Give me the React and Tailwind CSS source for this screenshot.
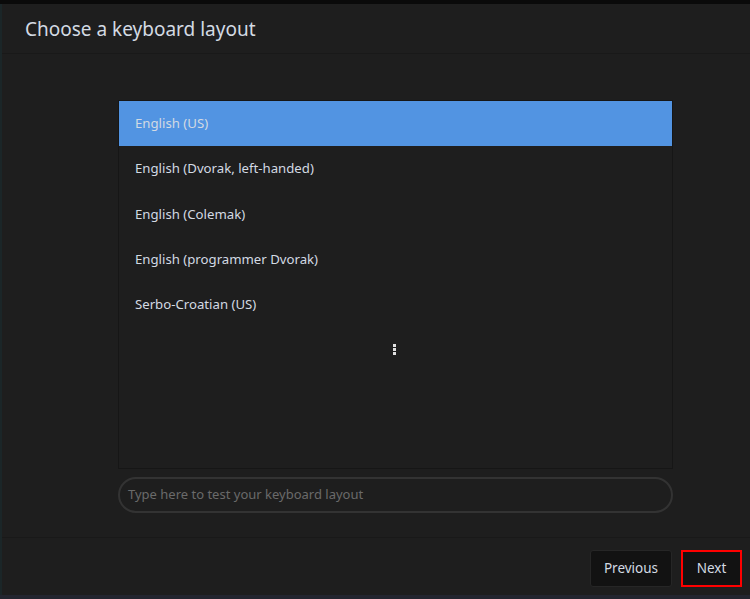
import React from "react";

const items = [
  "English (US)",
  "English (Dvorak, left-handed)",
  "English (Colemak)",
  "English (programmer Dvorak)",
  "Serbo-Croatian (US)",
];

export default function App() {
  return (
    <div
      className="w-[750px] h-[599px] flex flex-col bg-[#1e1e1e] overflow-hidden"
      style={{ fontFamily: '"Noto Sans", "Open Sans", sans-serif' }}
    >
      <div className="h-[4px] bg-[#0a0a0a] shrink-0" />
      <div className="flex-1 flex min-h-0">
        <div className="w-[2px] bg-[#1b2628]" />
        <div className="flex-1 flex flex-col min-w-0">
          <div className="h-[50px] shrink-0 flex items-center pl-[23px] pt-[2px] border-b border-[#191919]">
            <span className="text-[19px] text-[#d3dae3]">Choose a keyboard layout</span>
          </div>
          <div className="flex-1 flex flex-col pt-[46px] pl-[116px] border-b border-[#191919]">
            <div className="w-[555px] h-[369px] border border-[#161616] flex flex-col">
              {items.map((t, i) => (
                <div
                  key={t}
                  className={
                    "h-[45.25px] flex items-center pl-[16px] pt-[1px] text-[13.2px] text-[#d3dae3] shrink-0 " +
                    (i === 0 ? "bg-[#5294e2]" : "")
                  }
                >
                  {t}
                </div>
              ))}
              <div className="h-[45.25px] flex items-center justify-center shrink-0">
                <div className="flex flex-col gap-[1px] ml-[-2px]">
                  <div className="w-[3px] h-[3px] bg-[#e0e0e0]" />
                  <div className="w-[3px] h-[3px] bg-[#e0e0e0]" />
                  <div className="w-[3px] h-[3px] bg-[#e0e0e0]" />
                </div>
              </div>
            </div>
            <div className="mt-[8px] mb-[22px] w-[555px] h-[36px] rounded-full border-2 border-[#333333] flex items-center pl-[8px]">
              <span className="text-[13px] text-[#6a6a6a]">Type here to test your keyboard layout</span>
            </div>
          </div>
          <div className="h-[57px] shrink-0 flex items-start justify-end gap-[9px] pr-[8px] pt-[12px]">
            <button className="w-[82px] h-[37px] rounded-[3px] bg-[#121212] border border-[#262626] text-[13.5px] text-[#d3dae3]">
              Previous
            </button>
            <button className="w-[61px] h-[37px] bg-[#121212] border-2 border-[#ff0000] text-[13.5px] text-[#d3dae3]">
              Next
            </button>
          </div>
        </div>
      </div>
      <div className="h-[4px] bg-[#23252f] shrink-0" />
    </div>
  );
}
